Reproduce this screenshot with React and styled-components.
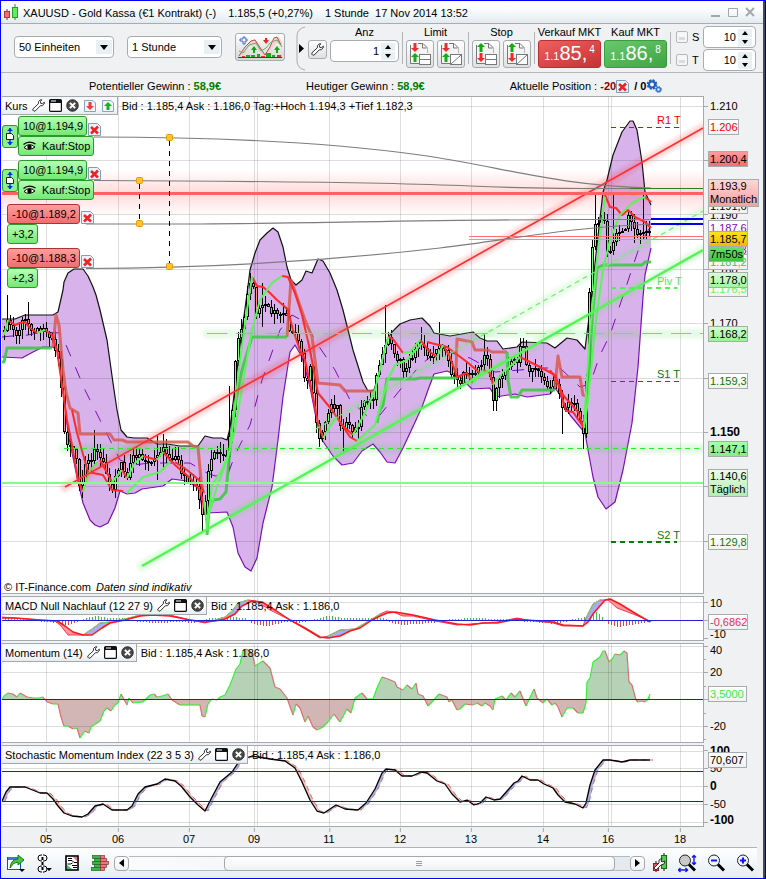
import React from "react";
import styled, { createGlobalStyle, css } from "styled-components";

const Global = createGlobalStyle`
  * { box-sizing: border-box; }
  body { margin: 0; background: #eff1f3; }
  body, button, input, select { font: 11px/14px "Liberation Sans", Arial, sans-serif; color: #000; }
  button { padding: 0; cursor: pointer; }
`;

/* ---------- window frame ---------- */

const Frame = styled.div`
  display: flex;
  flex-direction: column;
  min-height: 100vh;
  background: #eff1f3;
  border: 1px solid #0000f0;
  border-right-color: #00009c;
  box-shadow: inset -2px 0 0 #454b50;
  padding-right: 2px;
`;

const TitleBar = styled.header`
  display: flex;
  align-items: center;
  height: 23px;
  padding: 0 8px 0 2px;
  background: linear-gradient(#ffffff, #fafcfd 40%, #e3ebf0);
  border-bottom: 1px solid #a9adb1;
`;

const TitleText = styled.h1`
  flex: 1;
  display: flex;
  gap: 12px;
  margin: 0 0 0 4px;
  padding-top: 2px;
  font-size: 11px;
  font-weight: 400;
  white-space: pre;
`;

const WindowButtons = styled.div`
  display: flex;
  gap: 7px;
`;

const BareButton = styled.button`
  display: flex;
  align-items: center;
  justify-content: center;
  flex: none;
  border: 0;
  background: none;
`;

/* ---------- toolbar ---------- */

const Toolbar = styled.div`
  display: flex;
  height: 49px;
  padding-left: 13px;
  border-bottom: 1px solid #b4b8bb;
`;

const Setup = styled.div`
  display: flex;
  align-items: center;
  gap: 13px;
  flex: 1;
  padding-bottom: 2px;
`;

const SelectBox = styled.div`
  display: flex;
  position: relative;
  width: ${(p) => p.$width}px;
`;

const Select = styled.select`
  appearance: none;
  width: 100%;
  height: 22px;
  padding: 0 20px 0 4px;
  border: 1px solid #a8acb0;
  border-radius: 4px;
  background: #fff;
`;

const SelectArrow = styled.span`
  position: absolute;
  right: 2px;
  top: 4px;
  width: 16px;
  height: 14px;
  display: flex;
  align-items: center;
  justify-content: center;
  background: #e9f0f4;
  pointer-events: none;
`;

const IndicatorButton = styled.button`
  display: flex;
  align-items: center;
  justify-content: center;
  width: 50px;
  height: 28px;
  border: 1px solid #a8acb0;
  border-radius: 3px;
  background: linear-gradient(#fff, #d5d5d5);
`;

const Trading = styled.div`
  display: flex;
  align-items: stretch;
  padding: 2px 7px 1px 0;
`;

const Brace = styled.div`
  display: flex;
  width: 12px;
`;

const Divider = styled.span`
  width: 1px;
  height: 32px;
  margin: 6px 3px 0;
  background: #b1b5b8;
`;

const Column = styled.div`
  display: flex;
  flex-direction: column;
  align-items: center;
  gap: 1px;
  ${(p) => p.$wide && css`width: 63px;`}
  ${(p) => p.$apart && css`margin-left: 3px;`}
`;

const ColumnLabel = styled.span`
  height: 13px;
  line-height: 13px;
  white-space: nowrap;
`;

const ButtonPair = styled.div`
  display: flex;
  gap: 3px;
`;

const ToolButton = styled.button`
  display: flex;
  align-items: center;
  justify-content: center;
  width: ${(p) => p.$size}px;
  height: ${(p) => p.$size}px;
  margin-top: ${(p) => (p.$below ? 14 : 0)}px;
  border: 1px solid #a8acb0;
  border-radius: 3px;
  background: linear-gradient(#fff, #dfe0e1);
`;

const SpinBox = styled.div`
  display: flex;
  align-items: center;
  width: ${(p) => p.$width}px;
  height: 22px;
  padding-right: 3px;
  border: 1px solid #a8acb0;
  border-radius: 4px;
  background: #fff;
`;

const SpinInput = styled.input`
  flex: 1;
  min-width: 0;
  height: 16px;
  padding: 0 2px 0 0;
  border: 0;
  outline: 0;
  background: none;
  text-align: right;
`;

const SpinButtons = styled.div`
  display: flex;
  flex-direction: column;
  gap: 1px;
  width: 14px;
`;

const SpinButton = styled.button`
  display: flex;
  align-items: center;
  justify-content: center;
  height: 8px;
  border: 0;
  background: #e9f0f4;
`;

const MarketButton = styled.button`
  display: flex;
  align-items: baseline;
  justify-content: center;
  width: 63px;
  height: 28px;
  border: 1px solid ${(p) => (p.$buy ? "#3b9c3d" : "#bb2f33")};
  border-radius: 3px;
  background: ${(p) => (p.$buy ? "linear-gradient(160deg,#68c96c,#3ea442)" : "linear-gradient(160deg,#f0605f,#c53235)")};
  color: #fff;
  font-size: 20px;
  line-height: 25px;

  small { font-size: 11px; }
  sup { font-size: 10px; line-height: 10px; align-self: flex-start; padding: 4px 0 0 2px; }
`;

const Protect = styled.div`
  display: flex;
  flex-direction: column;
  gap: 1px;
  margin-left: 2px;
`;

const ProtectRow = styled.div`
  display: flex;
  align-items: center;
`;

const CheckLabel = styled.label`
  display: flex;
  align-items: center;
  gap: 4px;
  width: 27px;
`;

const Check = styled.input`
  appearance: none;
  width: 12px;
  height: 12px;
  margin: 0;
  border: 1px solid #b5b9bc;
  border-radius: 2px;
  background: linear-gradient(#f8f8f8 50%, #d9dcde 50%);
  box-shadow: inset 0 0 0 2px #f4f5f6;
  &:checked { background: #3c7fc0; }
`;

const InfoRow = styled.div`
  display: flex;
  align-items: center;
  gap: 85px;
  height: 23px;
  padding: 3px 0 0 88px;
  white-space: pre;
`;

const InfoItem = styled.span`
  display: flex;
  align-items: center;
  b { color: ${(p) => p.$color}; }
  strong { margin-left: 5px; }
`;

/* ---------- charts ---------- */

const Charts = styled.main`
  display: flex;
  flex-direction: column;
  gap: 2px;
  padding: 0 6px 0 1px;
`;

const ChartRow = styled.section`
  display: flex;
`;

const Plot = styled.div`
  position: relative;
  flex: 1;
  min-width: 0;
  height: ${(p) => p.$height}px;
  border: solid #a5a9ad;
  border-width: 1px 1px 1px 0;
  background: #fff;
  overflow: hidden;
`;

const Canvas = styled.svg`
  display: block;
  width: 100%;
  height: 100%;
`;

const PlotHead = styled.div`
  position: absolute;
  left: 0;
  top: 0;
  display: flex;
  align-items: center;
  gap: 4px;
  white-space: nowrap;
`;

const HeadTools = styled.div`
  display: flex;
  align-items: center;
  gap: 4px;
  height: 18px;
  padding: 0 2px 0 3px;
  border: solid #a5a9ad;
  border-width: 0 1px 1px 0;
  background: linear-gradient(#f4f7f9, #fff 50%, #e6ecf0);
`;

const Axis = styled.aside`
  position: relative;
  width: 53px;
  flex: none;
`;

const Tick = styled.span`
  position: absolute;
  left: 0;
  top: ${(p) => p.$y}px;
  width: ${(p) => (p.$minor ? 2 : 4)}px;
  height: 1px;
  background: #a5a9ad;
`;

const AxisText = styled.span`
  position: absolute;
  left: 6px;
  top: ${(p) => p.$y - 7}px;
  ${(p) => p.$bold && css`font-weight: 700; font-size: 12px;`}
`;

const PriceTag = styled.span`
  position: absolute;
  left: 4px;
  top: ${(p) => p.$top}px;
  min-width: ${(p) => p.$width || 39}px;
  height: ${(p) => p.$height || 16}px;
  padding: 0 0 0 1px;
  border: 1px solid #a8acb0;
  color: ${(p) => p.$color || "#000"};
  background: ${(p) => p.$bg || "linear-gradient(#fff,#f1f1f1)"};
  white-space: pre;
  line-height: ${(p) => (p.$height ? 13 : 14)}px;
`;

const LevelText = styled.span`
  position: absolute;
  left: ${(p) => p.$left}%;
  top: ${(p) => p.$top}px;
  color: ${(p) => p.$color};
`;

const Credit = styled.small`
  position: absolute;
  left: 2px;
  bottom: -1px;
  font-size: 11px;
  i { margin-left: 2px; }
`;

/* ---------- orders on the chart ---------- */

const Order = styled.div`
  position: absolute;
  left: ${(p) => p.$left}px;
  top: ${(p) => p.$top}px;
  display: flex;
  align-items: flex-start;
`;

const OrderHandle = styled.button`
  display: flex;
  align-items: center;
  justify-content: center;
  width: 16px;
  height: 23px;
  margin-top: 8px;
  border: 1px solid #2a9a2a;
  border-radius: 3px;
  background: #8df08d;
`;

const OrderBody = styled.div`
  display: flex;
  flex-direction: column;
  align-items: flex-start;
`;

const OrderTop = styled.div`
  display: flex;
  align-items: flex-end;
  gap: 1px;
  height: 19px;
`;

const OrderPart = styled.span`
  display: flex;
  align-items: center;
  gap: 6px;
  height: 20px;
  padding: 0 3px 0 4px;
  border: 1px solid ${(p) => (p.$short ? "#a33" : "#2a9a2a")};
  border-radius: 3px;
  background: ${(p) => (p.$short ? "linear-gradient(#ff9c9c,#ee6f6f)" : "linear-gradient(#b4ffb4,#74e874)")};
  white-space: nowrap;
`;

/* ---------- footer ---------- */

const TimeAxis = styled.div`
  position: relative;
  height: 20px;
  margin: 0 60px 0 1px;
`;

const TimeLabel = styled.span`
  position: absolute;
  left: ${(p) => p.$left}%;
  top: 0;
  padding-top: 5px;
  transform: translateX(-50%);
  &::before {
    content: "";
    position: absolute;
    left: 50%;
    top: 1px;
    width: 1px;
    height: 4px;
    background: #a5a9ad;
  }
`;

const BottomBar = styled.footer`
  display: flex;
  align-items: center;
  flex: 1;
  min-height: 31px;
  margin-right: 6px;
  padding: 0 2px 0 6px;
  border-top: 1px solid #b0b4b7;
  background: linear-gradient(#fff, #e6edf1);
`;

const IconGroup = styled.div`
  display: flex;
  align-items: center;
  gap: ${(p) => p.$gap}px;
`;

const Scroller = styled.div`
  display: flex;
  flex: 1;
  height: 15px;
  margin: 0 7px 0 5px;
`;

const ScrollEnd = styled.button`
  display: flex;
  align-items: center;
  justify-content: center;
  width: 15px;
  border: 1px solid #a5a9ad;
  border-radius: 4px;
  background: linear-gradient(#fff, #eef1f3);
`;

const Track = styled.div`
  display: flex;
  flex: 1;
  border: solid #b5babe;
  border-width: 1px 0;
  background: linear-gradient(90deg, #fafbfc, #e4eaee);
`;

const Thumb = styled.div`
  display: flex;
  align-items: center;
  justify-content: center;
  width: 78%;
  margin: -1px 0 -1px 19%;
  border: 1px solid #a5a9ad;
  border-radius: 4px;
  background: linear-gradient(#fff, #eff2f4);
`;

/* ---------- icons ---------- */

const Triangle = ({ up, w = 8, h = 5 }) => (
  <svg width={w} height={h} viewBox="0 0 8 5" preserveAspectRatio="none">
    <path d={up ? "M4 0L8 5H0z" : "M0 0H8L4 5z"} fill="#000" />
  </svg>
);

const CandleLogo = () => (
  <svg width="16" height="18" viewBox="0 0 16 18">
    <path d="M4 6v11" stroke="#b02020" />
    <rect x="1.500" y="8.500" width="5" height="6" fill="#f07070" stroke="#c03030" />
    <path d="M12 1v16" stroke="#1f8f1f" />
    <rect x="9.500" y="4.500" width="5" height="10" fill="#67e867" stroke="#23a023" />
  </svg>
);

const Wrench = ({ size = 13 }) => (
  <svg width={size} height={size} viewBox="0 0 14 14">
    <path
      d="M10.500 .8L8.800 1 7 2.800 6.800 5.200 1 10.600.9 12 2 13.100 3.400 13 9 7.300 11.200 7.200 13.100 5.400 13.300 3.400 11.300 5 9.500 4.800 9 3z"
      fill="#fff" stroke="#222" strokeWidth="1" strokeLinejoin="round"
    />
  </svg>
);

const WindowIcon = () => (
  <svg width="13" height="13" viewBox="0 0 13 13">
    <rect x=".6" y=".6" width="11.800" height="11.800" rx="1" fill="#fff" stroke="#111" strokeWidth="1.200" />
    <path d="M1 1h11v3H1z" fill="#111" />
    <path d="M2 2h5" stroke="#fff" />
  </svg>
);

const CloseIcon = () => (
  <svg width="13" height="13" viewBox="0 0 14 14">
    <circle cx="7" cy="7" r="6.200" fill="#4a4a4a" stroke="#222" />
    <path d="M4.200 4.200l5.600 5.600m0-5.600l-5.600 5.600" stroke="#fff" strokeWidth="2.200" />
  </svg>
);

const DocArrow = ({ up }) => (
  <svg width="14" height="14" viewBox="0 0 14 14">
    <path d="M1.500 1.500h8.500l2.500 2.500v8.500H1.500z" fill="#eef6fc" stroke="#8aa4bc" />
    {up
      ? <path d="M7 3l4 4H8.500v4h-3V7H3z" fill="#12b812" />
      : <path d="M7 11l4-4H8.500V3h-3v4H3z" fill="#f03c3c" />}
  </svg>
);

const DeleteIcon = () => (
  <svg width="13" height="13" viewBox="0 0 13 13">
    <path d="M.5.5h9l3 3v9H.5z" fill="#e9f3fb" stroke="#7f9cb8" />
    <path d="M3 4l7 6.500M10 3.500L3 10.500" stroke="#ee2222" strokeWidth="2.600" />
  </svg>
);

const GearsIcon = () => (
  <svg width="16" height="14" viewBox="0 0 16 14">
    <circle cx="6" cy="5.500" r="4" fill="none" stroke="#1d5fbf" strokeWidth="2.600" strokeDasharray="2 1.140" />
    <circle cx="6" cy="5.500" r="3" fill="none" stroke="#1d5fbf" strokeWidth="2" />
    <circle cx="12.500" cy="10.500" r="2" fill="none" stroke="#3576d0" strokeWidth="1.600" />
    <circle cx="12.500" cy="10.500" r="3" fill="none" stroke="#3576d0" strokeDasharray="1.200 1.150" />
  </svg>
);

const IndicatorIcon = () => (
  <svg width="46" height="24" viewBox="0 0 46 24">
    <path d="M2 20L8 14 14 6 18 4 21 8 25 17 29 20 34 12 38 3 42 2 45 7V10L40 8 36 12 30 19 25 20 18 10 12 12 6 20z" fill="#f2caca" opacity=".8" />
    <path d="M2 21L8 12 14 6 18 5 22 11 28 20 33 12 37 3 40 2 44 10" fill="none" stroke="#c04848" />
    <path d="M2 16L6 18 12 10 19 8 24 16 29 13 34 7 40 5 45 12" fill="none" stroke="#58b858" />
    <path d="M6 2h2v2h2v2H8v3H6V6H3V4h3z" fill="#fff" stroke="#3a67c8" />
    <path d="M17 11l3 4h-2v3h-2v-3h-2zM40 11l3 4h-2v3h-2v-3h-2z" fill="#12a812" />
    <path d="M29 9l-3-4h2V3h2v2h2z" fill="#ef2020" />
    <path d="M1 22.500h44" stroke="#2430c8" />
    <path d="M9 20h4v2H9zM14 20h4v2h-4zM20 19h3v3h-3zM29 18h5v4h-5zM35 20h3v2h-3z" fill="#20a820" />
    <path d="M5 21h3v1H5zM24 21h4v1h-4zM40 20h4v2h-4z" fill="#e03030" />
  </svg>
);

const OrderDocIcon = ({ stop, diagonal }) => {
  const up = "M6 0L10 4H7.500V9H4.500V4H2z";
  const down = "M6 9L10 5H7.500V0h-3v5H2z";
  return (
    <svg width="24" height="24" viewBox="0 0 24 24">
      <path d="M10 1.500h5l4 4V11M2.500 3v18.500H11" fill="none" stroke="#777" />
      <path d="M10 2h5v4h4v6h-8v9H3V3h7z" fill="#f4f4f4" />
      <path d="M14.500 1.500V6h4" fill="none" stroke="#777" />
      <rect x="11.500" y="12.500" width="11" height="10" fill="#fff" stroke="#777" />
      <path d={diagonal ? "M12 22L22 13" : "M12 17.500h10"} stroke="#777" />
      <g transform="translate(1 1)"><path d={stop ? up : down} fill={stop ? "#12a812" : "#ef2a2a"} /></g>
      <g transform="translate(1 11)"><path d={stop ? down : up} fill={stop ? "#ef2a2a" : "#12b012"} /></g>
    </svg>
  );
};

const EyeIcon = () => (
  <svg width="13" height="10" viewBox="0 0 13 10">
    <path d="M.5 3.500Q6-1 12.500 3" fill="none" stroke="#000" strokeWidth="1.300" />
    <path d="M1 6.500Q6 1 12 6 6 10.500 1 6.500z" fill="#fff" stroke="#000" />
    <circle cx="6.500" cy="6" r="2.200" />
  </svg>
);

const MoveIcon = () => (
  <svg width="10" height="19" viewBox="0 0 10 19">
    <path d="M5 1v17" stroke="#0030e0" strokeWidth="1.400" />
    <path d="M2 4l3-3 3 3zM2 15l3 3 3-3z" fill="#0030e0" />
    <path d="M1.500 6.500h5l2 2v4h-7z" fill="#fff" stroke="#222" />
  </svg>
);

const ShareIcon = () => (
  <svg width="18" height="18" viewBox="0 0 18 18">
    <rect x=".5" y="3.500" width="13" height="12" fill="#fff" stroke="#1850b8" />
    <path d="M1 3h12v3H1z" fill="#3c78d8" />
    <path d="M3 14Q4 5 11 5V1l6 5-6 5V8Q6 8 3 14z" fill="#46c846" stroke="#167816" />
    <path d="M12 15h6l-3 3z" />
  </svg>
);

const LinkIcon = () => (
  <svg width="16" height="19" viewBox="0 0 16 19">
    <g fill="none" stroke="#000">
      <path d="M5 1H4Q1 1 1 4t3 3h1M6 1h1q3 0 3 3T7 7H6" />
      <path d="M5 12H4q-3 0-3 3t3 3h1M6 12h1q3 0 3 3t-3 3H6" />
      <path d="M5.500 3v3M5.500 8v3M5.500 13v3" strokeWidth="2" />
    </g>
    <path d="M9 14h6l-3 3z" />
  </svg>
);

const ReportIcon = () => (
  <svg width="14" height="16" viewBox="0 0 14 16">
    <rect x="1" y="1" width="12" height="14" fill="#fff" stroke="#000" strokeWidth="1.600" />
    <path d="M3 3.500h4M3 5.500h4l2 2h3M2.500 9h3l2-1M7 10.500h5M8 12.500h4" stroke="#000" fill="none" />
    <path d="M8 2h4v4z" fill="#ef7777" /><path d="M2 10v4h5z" fill="#48bd48" />
  </svg>
);

const DepthIcon = () => (
  <svg width="18" height="17" viewBox="0 0 18 17">
    {[[0, 1, 4], [3, 3, 6], [6, 1, 8], [9, 3, 6], [12, 0, 4]].map(([y, left, len]) => (
      <g key={y}>
        <rect x={left + 0.5} y={y + 0.5} width={9 - left} height="3" fill="#35bb45" stroke="#24612a" strokeWidth=".7" />
        <rect x="9.500" y={y + 0.5} width={len} height="3" fill="#ee7777" stroke="#8a3535" strokeWidth=".7" />
      </g>
    ))}
  </svg>
);

const ChartToolIcon = () => (
  <svg width="16" height="20" viewBox="0 0 16 20">
    <path d="M12 0v18M4 8v11" stroke="#111" />
    <rect x="9.500" y="2.500" width="5" height="13" fill="#52cc52" stroke="#176b17" />
    <rect x="1.500" y="10.500" width="5" height="7" fill="#ee5555" stroke="#8a2020" />
    <path d="M10 5L7 7v3l-5 5 2 2 5-5 3-1 1-3-3 1-1-1z" fill="#fff" stroke="#333" />
  </svg>
);

const Magnifier = ({ mode }) => (
  <svg width="19" height="19" viewBox="0 0 19 19">
    <circle cx="7" cy="6.500" r="5.500" fill={mode === "fit" ? "#c9c9c9" : "#eef3ff"} stroke="#222" />
    <path d="M11 10.500l6 6" stroke="#000" strokeWidth="3" />
    {mode !== "fit" && <path d="M4 6.500h6" stroke="#1018e8" strokeWidth="2" />}
    {mode === "in" && <path d="M7 3.500v6" stroke="#1018e8" strokeWidth="2" />}
    {mode === "fit" && (
      <path d="M16 2v8M14 3.500l2-2 2 2M14 8.500l2 2 2-2M1 16h8M2.500 14L.5 16l2 2M7.500 14l2 2-2 2" fill="none" stroke="#1018e8" strokeWidth="1.400" />
    )}
  </svg>
);

/* ---------- chart data ---------- */

const parse = (text) => text.trim().split(/\s+/).map((p) => p.split(",").map(Number));

const UPPER = "2,319 15,319 25,315 53,315 58,312 63,290 64,282 68,273 74,269 83,269 88,276 93,287 96,295 100,310 107,340 113,383 117,410 121,430 127,437 134,438 147,438 157,444 167,444 180,446 198,446 205,436 213,438 222,438 227,440 230,428 234,395 240,345 247,294 250,270 255,253 260,240 267,233 273,228 278,232 283,247 287,267 291,280 296,285 302,280 306,271 312,273 318,259 323,261 330,273 337,290 343,310 353,350 363,382 368,391 374,390 378,377 387,340 392,332 400,324 410,320 422,318 430,326 434,333 450,336 473,332 480,338 487,341 497,341 503,349 517,347 522,342 547,343 555,348 567,338 577,340 585,349 590,310 597,245 603,192 607,180 613,155 622,132 630,121 633,121 637,130 642,162 645,192 651,205";
const LOWER = "2,357 22,358 33,352 43,347 53,347 60,353 63,390 68,433 77,477 83,503 90,520 95,525 100,527 108,523 115,508 120,491 127,494 135,493 142,489 163,486 172,479 187,481 198,488 202,507 207,513 227,512 233,527 238,553 245,567 251,571 257,558 263,523 272,487 278,440 283,397 290,352 295,345 302,357 310,387 317,423 322,440 333,456 342,465 353,463 362,451 373,444 380,452 387,462 395,463 403,448 410,433 422,407 428,390 434,374 447,371 460,377 472,389 490,388 495,397 515,394 527,397 550,394 555,388 560,395 570,415 585,433 588,450 593,477 598,497 606,509 615,502 623,470 632,423 638,367 643,297 645,275 651,248";
const MIDDLE = "2,337 12,336 28,335 43,332 60,333 66,345 85,390 100,420 110,440 120,460 133,465 150,463 190,463 205,472 215,476 228,474 235,455 250,425 262,380 280,330 292,315 305,322 318,345 335,370 350,400 368,417 380,415 400,390 420,365 440,350 470,358 495,372 520,370 545,368 560,368 580,387 590,384 600,355 610,335 625,290 640,245 651,225";

const TREND_DOWN = [
  "53,347 56,315 59,325 63,370 66,392 70,408 78,413 80,434 110,434 114,440 122,440 127,442 188,442 193,446 198,447 201,480 203,492",
  "287,337 291,280 298,300 305,320 312,337 318,383 340,385 345,391 373,391",
  "456,372 457,339 472,342 475,350 488,350 492,352 507,352",
  "555,387 558,356 562,377 580,377 583,395 585,396",
];
const TREND_UP = [
  "2,362 4,362 7,348 52,348",
  "207,535 209,510 213,500 220,499 226,492 229,460 232,430 236,400 242,370 248,350 252,337 287,337",
  "377,423 379,412 383,405 387,379 415,379 420,378 457,378",
  "507,352 508,380 511,397 518,397 522,390 555,390",
  "585,420 588,390 592,320 597,268 603,265 642,265 645,262 651,262",
];
const AVG_DOWN = [
  "8,320 15,325 20,323 25,322 30,328 37,333", "45,330 52,335 57,350 62,385 67,420 72,445 78,480 83,492",
  "72,410 77,433 88,472 103,475 112,490 123,491", "100,460 112,482", "122,470 127,478", "143,456 157,460",
  "163,452 175,465 190,478 200,490 205,510", "175,462 187,470 199,480 204,493",
  "252,277 257,286 263,287 270,293 277,300 283,305 288,310 293,330 300,350 305,360 313,397 318,423 323,438",
  "282,276 288,277 295,293 302,315 310,350 318,393 332,410 340,422 350,437 357,441", "337,417 342,425 353,435",
  "388,337 393,339 403,353", "420,340 430,352 437,357", "427,342 447,347 467,362 480,373",
  "443,345 450,357 457,377 467,373 473,383", "483,370 490,373 493,385",
  "520,357 540,367 555,375 563,395 570,403 578,412 584,428", "550,370 557,380 566,411 573,412 584,428",
  "605,195 610,207 616,208 622,215 628,210 635,217 645,222 651,228", "645,197 651,202",
];
const AVG_UP = [
  "4,335 8,320", "37,333 45,330", "83,492 88,475 92,468 98,462", "112,482 122,470", "127,478 135,463 143,456",
  "157,460 163,452", "127,493 143,477 160,472 170,462", "204,500 207,528 212,485 222,470 230,450 240,360 247,310 252,277",
  "207,520 216,490 227,460 235,430 245,370 252,330 260,300 272,283 282,276", "323,438 333,422 337,417",
  "353,435 365,413 375,390 383,357 388,337", "357,441 375,425 382,400 388,380 395,365 407,360 422,343",
  "403,353 410,352 420,340", "437,357 443,345", "473,383 483,370", "493,385 503,372 512,365 520,357",
  "584,428 588,400 596,320 603,270 610,240 620,215 632,203 640,199 645,197", "584,425 590,330 597,260 605,197",
];

const PRICE = parse("4,325 8,318 12,325 17,335 21,317 26,325 30,330 35,335 40,332 45,328 50,332 53,338 57,355 60,360 62,405 65,440 68,440 71,455 75,455 79,490 83,490 86,460 90,468 92,440 97,450 102,458 106,470 110,480 113,485 118,472 121,465 125,475 128,485 131,460 138,450 143,458 148,462 153,458 160,455 164,450 168,460 172,465 176,460 180,472 184,475 190,482 196,485 200,500 203,530 207,480 213,455 218,458 222,463 227,450 231,420 235,360 239,330 243,318 247,300 252,280 255,320 260,310 267,307 277,310 283,308 288,313 290,337 297,340 301,358 306,392 310,372 314,395 317,428 319,437 323,425 327,408 331,403 336,405 341,440 345,425 350,430 354,435 358,420 362,400 366,392 369,398 373,400 377,360 381,365 386,340 390,345 394,355 398,365 403,368 408,358 412,352 416,340 421,342 427,358 433,360 438,345 443,350 448,358 453,375 459,382 464,365 470,375 474,380 479,370 484,358 488,368 493,400 498,375 503,370 508,362 513,360 518,365 521,338 524,355 528,380 533,370 540,368 546,382 553,380 557,385 562,410 566,412 570,405 575,410 580,420 584,430 587,350 589,290 593,225 598,220 603,212 606,255 610,255 615,235 620,238 628,212 635,230 642,227 648,230 651,238");

const SPIKES = { 7: [295, 330], 28: [302, 335], 82: [470, 498], 94: [430, 460], 157: [436, 480], 163: [434, 470], 202: [490, 531], 229: [386, 470], 250: [275, 300], 262: [283, 327], 319: [420, 447], 343: [425, 452], 385: [305, 350], 421: [327, 350], 439: [322, 360], 484: [333, 370], 493: [372, 411], 562: [390, 434], 583: [415, 449], 595: [195, 250], 613: [192, 255], 634: [214, 243], 643: [192, 236] };

const valueAt = (points, x) => {
  for (let i = 1; i < points.length; i++) {
    if (x <= points[i][0]) {
      const [x0, y0] = points[i - 1];
      const [x1, y1] = points[i];
      return y0 + ((y1 - y0) * (x - x0)) / (x1 - x0);
    }
  }
  return points[points.length - 1][1];
};

const wobble = (n) => Math.sin(n * 12.9898) * 43758.5453 % 1;

const CANDLES = Array.from({ length: 216 }, (_, i) => {
  const x = 4 + i * 3;
  const open = Math.round(valueAt(PRICE, x - 3) + wobble(i) * 7);
  const close = Math.round(valueAt(PRICE, x) + wobble(i + 1) * 7);
  const spike = SPIKES[x] || [];
  const top = Math.min(open, close);
  const bottom = Math.max(open, close, top + 2);
  return {
    x, top, bottom, up: close <= open,
    high: Math.min(top - Math.round(Math.abs(wobble(i + 40)) * 10), spike[0] || 999),
    low: Math.max(bottom + Math.round(Math.abs(wobble(i + 90)) * 10), spike[1] || 0),
  };
});

const MACD_SIGNAL = "2,618 8,618 15,618 40,620 57,621 65,626 73,632 83,635 92,635 102,628 110,623 125,620 140,616 152,615 170,616 190,620 205,622 215,621 225,619 235,614 242,606 252,601 262,602 275,610 290,620 305,628 320,637 328,638 340,636 350,631 360,628 372,620 380,616 387,613 395,612 413,615 435,620 457,624 470,625 483,623 497,623 517,619 527,620 553,622 563,625 583,626 588,622 593,614 605,600 610,599 620,604 633,612 650,622";
const MACD_LINE = "2,617 15,618 40,620 55,621 61,626 68,635 83,635 92,629 100,623 110,622 125,619 140,615 152,614 170,615 190,620 205,623 215,620 225,617 232,611 238,603 248,600 256,601 270,610 290,620 305,629 320,638 328,636 340,630 355,629 372,619 380,614 387,611 393,612 403,616 413,616 435,621 457,625 470,624 483,623 497,622 517,618 527,620 553,623 563,626 583,626 586,618 593,604 600,600 608,600 617,608 633,614 650,621";
const HIST = parse("5,2 35,1 42,-1 58,-2 66,-4 75,-2 85,2 95,4 108,2 120,2 140,-1 155,-2 180,-1 195,-2 210,2 232,3 245,2 255,-4 268,-5 285,-1 297,-2 315,1 328,4 345,2 360,2 383,2 392,-2 403,-4 413,-3 432,-2 450,1 475,2 500,1 530,-1 555,-3 573,1 583,2 590,6 597,8 602,3 609,-4 618,-6 635,-3 650,-1");

const MOMENTUM = parse("2,699 4,696 8,693 13,694 17,697 20,693 27,697 33,698 38,698 43,697 47,702 53,704 58,704 61,717 64,726 68,726 73,729 77,728 80,738 85,731 89,733 91,727 97,723 100,721 104,711 107,708 111,711 115,705 118,703 121,694 127,705 129,698 133,703 143,702 150,695 154,694 157,697 162,696 168,694 172,700 180,705 200,705 202,716 205,717 208,704 212,699 217,700 220,697 225,695 230,685 236,669 240,664 243,651 246,649 250,651 253,657 255,666 263,661 270,668 275,687 280,689 287,698 293,715 296,704 300,708 305,722 308,716 313,727 317,730 323,727 328,722 334,714 340,722 347,709 351,713 355,698 362,693 367,699 373,699 377,688 382,677 388,679 395,682 397,687 403,690 407,685 412,689 416,683 418,694 423,696 428,706 432,702 439,694 447,697 449,702 452,700 457,710 460,709 465,704 473,705 477,703 482,706 485,703 490,706 493,710 495,699 502,696 506,700 511,693 515,697 520,691 526,706 534,689 537,698 543,703 547,699 552,705 555,703 558,707 562,717 567,708 573,708 578,713 583,713 586,703 587,682 590,678 593,662 600,657 603,651 605,651 609,662 613,658 615,654 620,655 624,651 627,653 629,682 632,685 636,700 638,702 642,701 645,702 648,699 650,694");

const STOCH = parse("2,801 6,792 10,787 25,787 35,791 40,793 47,793 53,799 58,806 64,813 72,816 82,817 88,814 95,806 103,804 112,810 127,810 132,806 138,794 145,787 157,784 165,779 175,781 181,786 190,797 198,805 205,811 211,799 220,782 232,772 240,760 252,756 270,759 285,761 295,768 302,782 310,800 317,811 324,813 330,809 336,805 345,809 358,810 366,803 375,789 382,773 386,769 395,770 402,776 412,776 421,772 427,773 437,781 445,784 452,794 460,802 467,800 474,805 480,803 486,797 494,800 500,799 508,790 514,783 518,781 522,776 530,780 538,780 544,784 553,788 558,795 565,802 575,804 583,808 586,803 590,785 595,770 603,760 610,760 622,762 630,760 650,760");

const DAYS = [[46, "05"], [118, "06"], [189, "07"], [254, "09"], [329, "11"], [400, "12"], [471, "13"], [543, "14"], [608, "16"], [680, "18"]];
const GRID_X = [46, 118, 189, 254, 257, 329, 400, 471, 543, 608, 611, 680];
const percent = (x) => ((x - 2) / 701) * 100;

const str = (points) => points.map((p) => p.join(",")).join(" ");
const reversed = (text) => text.split(" ").reverse().join(" ");

const Line = ({ pts, color, w = 1, ...rest }) => (
  <polyline points={pts} fill="none" stroke={color} strokeWidth={w} strokeLinejoin="round" {...rest} />
);

const Grid = ({ ys, top, bottom }) => (
  <g stroke="#000" strokeOpacity=".13" shapeRendering="crispEdges">
    {GRID_X.map((x) => <path key={x} d={`M${x + 0.5} ${top}V${bottom}`} />)}
    {ys.map((y) => <path key={y} d={`M2 ${y + 0.5}H703`} />)}
  </g>
);

const Glow = ({ x1, y1, x2, y2, color, w, dash, faint }) => (
  <g stroke={color}>
    {[13, 9, 6].map((s) => <line key={s} x1={x1} y1={y1} x2={x2} y2={y2} strokeWidth={s} opacity={faint ? ".045" : ".06"} strokeLinecap="round" />)}
    <line x1={x1} y1={y1} x2={x2} y2={y2} strokeWidth={w} strokeDasharray={dash} />
  </g>
);

function PriceCanvas() {
  return (
    <Canvas viewBox="2 97 701 496" preserveAspectRatio="none" role="img" aria-label="Kurs">
      <defs>
        <linearGradient id="resistance" x2="0" y2="1">
          <stop offset="0" stopColor="#f44" stopOpacity="0" />
          <stop offset=".5" stopColor="#f44" stopOpacity=".2" />
          <stop offset="1" stopColor="#f44" stopOpacity="0" />
        </linearGradient>
      </defs>
      <polygon points={`${UPPER} ${reversed(LOWER)}`} fill="#d8b2ea" />
      <Grid ys={[106, 160, 214, 269, 323, 378, 432, 486, 541]} top={97} bottom={593} />
      <rect x="2" y="170" width="701" height="46" fill="url(#resistance)" />
      <Line pts={UPPER} color="#111" w={1.2} />
      <Line pts={LOWER} color="#7a0fb4" w={1.2} />
      <Line pts={MIDDLE} color="#7a0fb4" strokeDasharray="12 12" />
      <g shapeRendering="crispEdges">
        {CANDLES.map((c) => (
          <g key={c.x}>
            <rect x={c.x} y={c.high} width="1" height={c.low - c.high} />
            <rect x={c.x - 1} y={c.top} width="3" height={c.bottom - c.top} />
            <rect x={c.x} y={c.top + 1} width="1" height={Math.max(0, c.bottom - c.top - 2)} fill={c.up ? "#7dff7d" : "#ff8f8f"} />
          </g>
        ))}
      </g>
      {TREND_DOWN.map((p) => <Line key={p} pts={p} color="#d85a50" w={3} opacity=".85" />)}
      {TREND_UP.map((p) => <Line key={p} pts={p} color="#3fc846" w={3} opacity=".9" />)}
      {AVG_DOWN.map((p) => <Line key={p} pts={p} color="#ff2a2a" w={2} />)}
      {AVG_UP.map((p) => <Line key={p} pts={p} color="#5cf45c" w={2} />)}
      <Glow x1={65} y1={487} x2={703} y2={128} color="#ff3030" w={1.7} />
      <Glow x1={142} y1={566} x2={703} y2={250} color="#55f555" w={2.5} />
      <Glow x1={316} y1={429} x2={703} y2={211} color="#70f070" w={1.2} dash="5 4" faint />
      <line x1="2" y1="193.500" x2="703" y2="193.500" stroke="#ff6262" strokeWidth="3" />
      <line x1="2" y1="483" x2="703" y2="483" stroke="#86fa86" strokeWidth="2" />
      <Glow x1={64} y1={448.5} x2={703} y2={448.5} color="#2fe82f" w={1} dash="5 4" faint />
      <Glow x1={207} y1={333.5} x2={703} y2={333.5} color="#55ee55" w={1} dash="20 9" faint />
      <line x1="469" y1="236.500" x2="703" y2="236.500" stroke="#ff7070" />
      <line x1="469" y1="239.500" x2="703" y2="239.500" stroke="#5ce85c" />
      <g fill="none" stroke="#7d7d7d" strokeWidth="1.200">
        <path d="M94 137C240 137 340 144 420 155S550 185 651 188" />
        <path d="M94 180.500C240 181 400 183 470 186S580 188.500 651 188.500" />
        <path d="M86 224H200C330 223 430 220 580 219.500H651" />
        <path d="M86 268.500C240 268 370 256 440 248S560 228 651 224" />
      </g>
      <path d="M630 188.500h73" stroke="#2d7d2d" />
      <path d="M651 219h52M651 224h52" stroke="#0000e8" strokeWidth="2" />
      <g strokeDasharray="5 4">
        <path d="M611 127.500h68" stroke="#e00" />
        <path d="M611 288h66" stroke="#4ff04f" strokeWidth="2" />
        <path d="M611 381.500h68" stroke="#0a7a0a" />
        <path d="M611 542h66" stroke="#0a7a0a" strokeWidth="2" />
      </g>
      <path d="M139.500 184v37M169.500 141v122" stroke="#000" strokeDasharray="5 5" />
      {[[139, 180], [139, 223], [169, 137], [169, 266]].map(([x, y]) => (
        <rect key={`${x}-${y}`} x={x - 2.5} y={y - 2.5} width="6" height="6" rx="1" fill="#ffc52e" stroke="#e79a10" />
      ))}
    </Canvas>
  );
}

function MacdCanvas() {
  return (
    <Canvas viewBox="2 597 701 43" preserveAspectRatio="none" role="img" aria-label="MACD">
      <Grid ys={[602]} top={597} bottom={640} />
      <g shapeRendering="crispEdges">
        {Array.from({ length: 216 }, (_, i) => 5 + i * 3).map((x) => {
          const v = Math.round(valueAt(HIST, x));
          return <rect key={x} x={x} y={v > 0 ? 620 - v : 621} width="1" height={Math.abs(v)} fill={v > 0 ? "#3fc13f" : "#d94444"} />;
        })}
      </g>
      <polygon points={`${MACD_LINE} ${reversed(MACD_SIGNAL)}`} fill="#f99" />
      <path
        d="M83 635L92 629 100 623 110 622 102 628 92 635zM320 638L328 636 340 630 355 629 350 631 340 636zM225 617L232 611 238 603 248 600 242 606 235 614zM586 618L593 604 600 600 608 600 605 600 593 614 588 622z"
        fill="#a9a9f5"
      />
      <Line pts={MACD_LINE} color="#ee3a66" />
      <Line pts="83,635 92,629 100,623 110,622 125,619 140,615" color="#62e862" />
      <Line pts="215,620 225,617 232,611 238,603 248,600" color="#62e862" />
      <Line pts="328,636 340,630 355,629 372,619 380,614" color="#62e862" />
      <Line pts="586,618 593,604 600,600" color="#62e862" />
      <Line pts={MACD_SIGNAL} color="#ff1616" w={1.5} />
      <path d="M2 620.500h701" stroke="#2020d8" />
    </Canvas>
  );
}

function MomentumCanvas() {
  const area = `2,699 ${str(MOMENTUM)} 650,699`;
  return (
    <Canvas viewBox="2 644 701 98" preserveAspectRatio="none" role="img" aria-label="Momentum">
      <clipPath id="above"><rect x="2" y="644" width="701" height="55" /></clipPath>
      <clipPath id="below"><rect x="2" y="699" width="701" height="43" /></clipPath>
      <polygon points={area} fill="#b6d2b6" clipPath="url(#above)" />
      <polygon points={area} fill="#d2b6b6" clipPath="url(#below)" />
      <Grid ys={[646, 672, 726]} top={644} bottom={742} />
      {MOMENTUM.slice(1).map((p, i) => (
        <Line key={p[0]} pts={str([MOMENTUM[i], p])} color={p[1] <= MOMENTUM[i][1] ? "#35f035" : "#d97070"} w={1.2} />
      ))}
      <path d="M2 699.500h701" stroke="#2020b8" />
    </Canvas>
  );
}

function StochCanvas() {
  const signal = STOCH.map(([x, y]) => [x + 3, y]);
  return (
    <Canvas viewBox="2 746 701 80" preserveAspectRatio="none" role="img" aria-label="Stochastic Momentum Index">
      <Grid ys={[751, 768, 786, 804, 822]} top={746} bottom={826} />
      {STOCH.slice(1).map((p, i) => (
        <polygon key={p[0]} points={str([STOCH[i], p, signal[i + 1], signal[i]])} fill={p[1] < STOCH[i][1] ? "#aab0e0" : "#f6c0c0"} />
      ))}
      <Line pts={str(signal)} color="#d86a6a" strokeDasharray="5 4" />
      <Line pts={str(STOCH)} color="#000" w={1.3} />
      <path d="M2 771.500h701M2 801.500h701" stroke="#2020b8" />
    </Canvas>
  );
}

/* ---------- composed parts ---------- */

function Spin({ label, value, width }) {
  return (
    <SpinBox $width={width}>
      <SpinInput aria-label={label} defaultValue={value} />
      <SpinButtons>
        <SpinButton aria-label={`${label} +`}><Triangle up w={6} h={4} /></SpinButton>
        <SpinButton aria-label={`${label} -`}><Triangle w={6} h={4} /></SpinButton>
      </SpinButtons>
    </SpinBox>
  );
}

function Picker({ label, value, width }) {
  return (
    <SelectBox $width={width}>
      <Select aria-label={label} defaultValue={value}><option>{value}</option></Select>
      <SelectArrow><Triangle /></SelectArrow>
    </SelectBox>
  );
}

function Head({ title, orders, extra = "" }) {
  return (
    <PlotHead>
      <HeadTools>
        <span>{title}</span>
        <BareButton aria-label="Einstellungen"><Wrench /></BareButton>
        <BareButton aria-label="Fenster"><WindowIcon /></BareButton>
        <BareButton aria-label="Schliessen"><CloseIcon /></BareButton>
        {orders && <BareButton aria-label="Nach unten"><DocArrow /></BareButton>}
        {orders && <BareButton aria-label="Nach oben"><DocArrow up /></BareButton>}
      </HeadTools>
      <span>Bid : 1.185,4 Ask : 1.186,0{extra}</span>
    </PlotHead>
  );
}

function OrderTag({ top, price, note, short }) {
  return (
    <Order $left={short ? 5 : 0} $top={top}>
      {!short && <OrderHandle aria-label="Order verschieben"><MoveIcon /></OrderHandle>}
      <OrderBody>
        <OrderTop>
          <OrderPart $short={short}>{price}</OrderPart>
          <BareButton aria-label="Order entfernen"><DeleteIcon /></BareButton>
        </OrderTop>
        <OrderPart>{!short && <EyeIcon />}{note}</OrderPart>
      </OrderBody>
    </Order>
  );
}

export default function App() {
  return (
    <>
      <Global />
      <Frame>
        <TitleBar>
          <CandleLogo />
          <TitleText>
            <span>XAUUSD - Gold Kassa (€1 Kontrakt) (-)</span>
            <span>1.185,5 (+0,27%)</span>
            <span>1 Stunde  17 Nov 2014 13:52</span>
          </TitleText>
          <WindowButtons>
            <BareButton aria-label="Minimieren"><svg width="10" height="10"><path d="M0 9h9" stroke="#a4a8ab" strokeWidth="2" /></svg></BareButton>
            <BareButton aria-label="Maximieren"><svg width="10" height="10"><path d="M.5 1.500h9v8h-9z" fill="none" stroke="#a4a8ab" /></svg></BareButton>
            <BareButton aria-label="Beenden"><svg width="10" height="10"><path d="M1 1l8 8M9 1L1 9" stroke="#a4a8ab" strokeWidth="2" /></svg></BareButton>
          </WindowButtons>
        </TitleBar>

        <Toolbar>
          <Setup>
            <Picker label="Einheiten" value="50 Einheiten" width={100} />
            <Picker label="Zeitrahmen" value="1 Stunde" width={95} />
            <IndicatorButton aria-label="Indikatoren"><IndicatorIcon /></IndicatorButton>
          </Setup>
          <Trading>
            <Brace>
              <svg width="12" height="45" viewBox="0 0 12 45">
                <path d="M9 1Q1 3 1 10V35Q1 42 9 44" fill="none" stroke="#a8acb0" />
                <path d="M3 18l5 4.500L3 27z" />
              </svg>
            </Brace>
            <ToolButton $size={19} $below aria-label="Handelseinstellungen"><Wrench /></ToolButton>
            <Column $apart>
              <ColumnLabel>Anz</ColumnLabel>
              <Spin label="Anz" value="1" width={69} />
            </Column>
            <Divider />
            <Column>
              <ColumnLabel>Limit</ColumnLabel>
              <ButtonPair>
                <ToolButton $size={28} aria-label="Limit"><OrderDocIcon /></ToolButton>
                <ToolButton $size={28} aria-label="Limit frei"><OrderDocIcon diagonal /></ToolButton>
              </ButtonPair>
            </Column>
            <Divider />
            <Column>
              <ColumnLabel>Stop</ColumnLabel>
              <ButtonPair>
                <ToolButton $size={28} aria-label="Stop"><OrderDocIcon stop /></ToolButton>
                <ToolButton $size={28} aria-label="Stop frei"><OrderDocIcon stop diagonal /></ToolButton>
              </ButtonPair>
            </Column>
            <Divider />
            <ButtonPair>
              <Column $wide>
                <ColumnLabel>Verkauf MKT</ColumnLabel>
                <MarketButton><small>1.1</small>85,<sup>4</sup></MarketButton>
              </Column>
              <Column $wide>
                <ColumnLabel>Kauf MKT</ColumnLabel>
                <MarketButton $buy><small>1.1</small>86,<sup>8</sup></MarketButton>
              </Column>
            </ButtonPair>
            <Divider />
            <Protect>
              <ProtectRow>
                <CheckLabel><Check type="checkbox" />S</CheckLabel>
                <Spin label="Stop Abstand" value="10" width={53} />
              </ProtectRow>
              <ProtectRow>
                <CheckLabel><Check type="checkbox" />T</CheckLabel>
                <Spin label="Ziel Abstand" value="10" width={53} />
              </ProtectRow>
            </Protect>
          </Trading>
        </Toolbar>

        <InfoRow>
          <InfoItem $color="#007d00">Potentieller Gewinn : <b>58,9€</b></InfoItem>
          <InfoItem $color="#007d00">Heutiger Gewinn : <b>58,9€</b></InfoItem>
          <InfoItem $color="#8b0000">
            Aktuelle Position : <b>-20</b>
            <BareButton aria-label="Position schliessen"><DeleteIcon /></BareButton>
            <strong>/ 0</strong>
            <BareButton aria-label="Positionseinstellungen"><GearsIcon /></BareButton>
          </InfoItem>
        </InfoRow>

        <Charts>
          <ChartRow>
            <Plot $height={498}>
              <PriceCanvas />
              <LevelText $left={percent(657)} $top={16} $color="#ee0000">R1 T</LevelText>
              <LevelText $left={percent(657)} $top={177} $color="#50e850">Piv T</LevelText>
              <LevelText $left={percent(657)} $top={270} $color="#0a7a0a">S1 T</LevelText>
              <LevelText $left={percent(657)} $top={431} $color="#0a7a0a">S2 T</LevelText>
              <Head title="Kurs" orders extra=" Tag:+Hoch 1.194,3 +Tief 1.182,3" />
              <OrderTag top={20} price="10@1.194,9" note="Kauf:Stop" />
              <OrderTag top={64} price="10@1.194,9" note="Kauf:Stop" />
              <OrderTag top={108} price="-10@1.189,2" note="+3,2" short />
              <OrderTag top={152} price="-10@1.188,3" note="+2,3" short />
              <Credit>© IT-Finance.com <i>Daten sind indikativ</i></Credit>
            </Plot>
            <Axis>
              {[10, 64, 118, 173, 227, 282, 336, 390, 445].map((y) => <Tick key={y} $y={y} />)}
              <AxisText $y={10}>1.210</AxisText>
              <PriceTag $top={23} $width={30} $color="#ee0000">1.206</PriceTag>
              <PriceTag $top={55} $bg="linear-gradient(#ff9a9a,#f26f6f)">1.200,4</PriceTag>
              <AxisText $y={119}>1.190</AxisText>
              <PriceTag $top={102}>1.191,6</PriceTag>
              <PriceTag $top={124} $color="#7a0fb4">1.187,6</PriceTag>
              <PriceTag $top={146} $color="#7a0fb4">1.182,8</PriceTag>
              <AxisText $y={174}>1.180</AxisText>
              <PriceTag $top={158} $color="#3fc846">1.181,2</PriceTag>
              <PriceTag $top={83} $width={51} $height={28} $bg="linear-gradient(#ffd6d6,#f5a0a0)">{"1.193,9\nMonatlich"}</PriceTag>
              <PriceTag $top={135} $bg="linear-gradient(#ffe11e,#f2b800)">1.185,7</PriceTag>
              <PriceTag $top={150} $width={34} $bg="linear-gradient(#68e368,#3fc33f)">7m50s</PriceTag>
              <PriceTag $top={185} $color="#5cf45c">1.176,5</PriceTag>
              <PriceTag $top={176} $bg="linear-gradient(#d8ffd8,#a2f5a2)">1.178,0</PriceTag>
              <AxisText $y={227}>1.170</AxisText>
              <PriceTag $top={230} $bg="linear-gradient(#d0ffd0,#9af09a)">1.168,2</PriceTag>
              <PriceTag $top={277} $color="#0a7a0a">1.159,3</PriceTag>
              <AxisText $y={336} $bold>1.150</AxisText>
              <PriceTag $top={345} $bg="linear-gradient(#a8ffa8,#84ee84)">1.147,1</PriceTag>
              <PriceTag $top={373} $width={40} $height={28} $bg="linear-gradient(#e9fbe9,#b2efb2)">{"1.140,6\nTäglich"}</PriceTag>
              <PriceTag $top={438} $color="#0a7a0a">1.129,8</PriceTag>
            </Axis>
          </ChartRow>

          <ChartRow>
            <Plot $height={45}>
              <MacdCanvas />
              <Head title="MACD Null Nachlauf (12 27 9)" />
            </Plot>
            <Axis>
              <Tick $y={6} /><Tick $y={24} /><Tick $y={42} />
              <AxisText $y={7}>10</AxisText>
              <AxisText $y={38}>-10</AxisText>
              <PriceTag $top={18} $color="#f02860">-0,6862</PriceTag>
            </Axis>
          </ChartRow>

          <ChartRow>
            <Plot $height={100}>
              <MomentumCanvas />
              <Head title="Momentum (14)" />
            </Plot>
            <Axis>
              {[3, 29, 56, 83].map((y) => <Tick key={y} $y={y} />)}
              {[16, 43, 70, 96].map((y) => <Tick key={y} $y={y} $minor />)}
              <AxisText $y={7}>40</AxisText>
              <AxisText $y={29}>20</AxisText>
              <AxisText $y={83}>-20</AxisText>
              <PriceTag $top={43} $color="#35f035">3,5000</PriceTag>
            </Axis>
          </ChartRow>

          <ChartRow>
            <Plot $height={82}>
              <StochCanvas />
              <Head title="Stochastic Momentum Index (22 3 5 3)" />
            </Plot>
            <Axis>
              {[5, 23, 41, 59, 77].map((y) => <Tick key={y} $y={y} />)}
              <AxisText $y={6} $bold>100</AxisText>
              <AxisText $y={23}>50</AxisText>
              <AxisText $y={41} $bold>0</AxisText>
              <AxisText $y={59}>-50</AxisText>
              <AxisText $y={75} $bold>-100</AxisText>
              <PriceTag $top={7}>70,607</PriceTag>
            </Axis>
          </ChartRow>
        </Charts>

        <TimeAxis>
          {DAYS.map(([x, day]) => <TimeLabel key={day} $left={percent(x)}>{day}</TimeLabel>)}
        </TimeAxis>

        <BottomBar>
          <IconGroup $gap={12}>
            <BareButton aria-label="Teilen"><ShareIcon /></BareButton>
            <BareButton aria-label="Verknüpfen"><LinkIcon /></BareButton>
            <BareButton aria-label="Bericht"><ReportIcon /></BareButton>
            <BareButton aria-label="Markttiefe"><DepthIcon /></BareButton>
          </IconGroup>
          <Scroller>
            <ScrollEnd aria-label="Zurück"><svg width="5" height="8"><path d="M5 0v8L0 4z" /></svg></ScrollEnd>
            <Track>
              <Thumb role="scrollbar" aria-label="Zeitraum" aria-controls="root" aria-valuenow={97}>
                <svg width="7" height="7"><path d="M0 1.500h6M0 3.500h6M0 5.500h6" stroke="#9a9ea2" /></svg>
              </Thumb>
            </Track>
            <ScrollEnd aria-label="Vor"><svg width="5" height="8"><path d="M0 0v8l5-4z" /></svg></ScrollEnd>
          </Scroller>
          <IconGroup $gap={10}>
            <BareButton aria-label="Charteinstellungen"><ChartToolIcon /></BareButton>
            <BareButton aria-label="Anpassen"><Magnifier mode="fit" /></BareButton>
            <BareButton aria-label="Verkleinern"><Magnifier mode="out" /></BareButton>
            <BareButton aria-label="Vergrössern"><Magnifier mode="in" /></BareButton>
          </IconGroup>
        </BottomBar>
      </Frame>
    </>
  );
}
